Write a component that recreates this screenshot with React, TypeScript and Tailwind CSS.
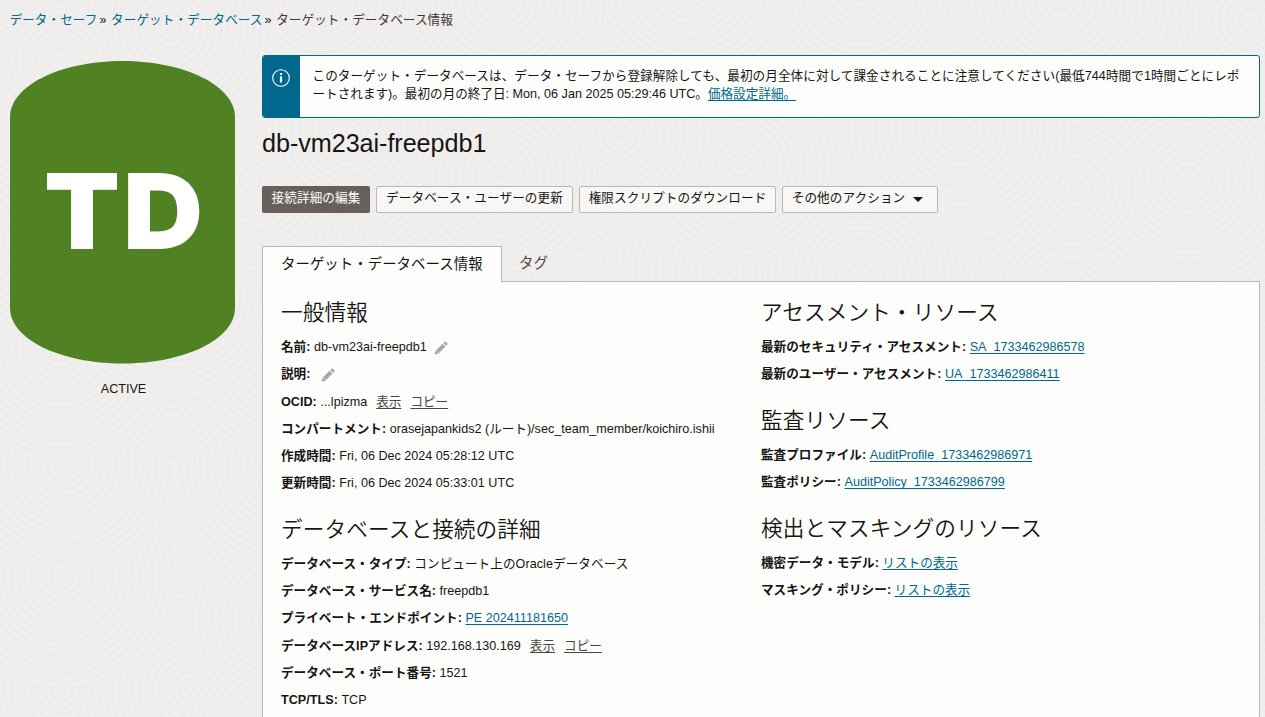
import type { ReactNode } from "react";

const RINGS = Array.from({ length: 17 }, (_, i) => 4 + i * 6.7);

/* Painted in order: each swirl covers part of the ones before it. */
const SWIRLS: [number, number, number][] = [
  [175, 745, 112], [62, 690, 108], [190, 690, 112], [290, 620, 108], [285, 740, 105],
  [62, 577, 112], [-50, 465, 108], [285, 465, 108], [65, 465, 108], [172, 400, 60], [60, 350, 110],
  [290, 350, 108], [170, 290, 112], [-40, 240, 108], [250, 180, 108],
  [420, 250, 110], [580, 260, 112], [720, 270, 108], [860, 275, 110], [1070, 300, 112],
  [1262, 640, 110], [1262, 520, 100], [1262, 400, 110], [1262, 290, 100],
  [1188, 178, 108], [1075, 190, 70], [960, 130, 112], [740, 165, 100], [620, 135, 95], [500, 175, 100], [350, 130, 90],
  [1250, 20, 100], [1060, 0, 112], [860, -10, 108], [690, -20, 100], [500, 0, 108],
  [320, -5, 100], [170, 30, 100], [20, -15, 108], [60, 60, 60],
];

function Backdrop() {
  return (
    <svg className="absolute inset-0 -z-10" width="1265" height="717" aria-hidden="true">
      <rect width="1265" height="717" fill="#f0efed" />
      {SWIRLS.map(([cx, cy, r], i) => (
        <g key={i}>
          <circle cx={cx} cy={cy} r={r} fill="#f0efed" />
          {RINGS.filter((n) => n <= r).map((n) => (
            <circle key={n} cx={cx} cy={cy} r={n} fill="none" stroke="#edecea" strokeWidth="2.6" />
          ))}
        </g>
      ))}
    </svg>
  );
}

function Pencil() {
  return (
    <svg className="ml-[7px] mt-[3px] shrink-0" width="14" height="14" viewBox="0 0 15 15" fill="#aaa5a0" aria-hidden="true">
      <path d="M.6 14.5 1.5 10.6 9.2 2.9 12.3 6 4.6 13.7Z" />
      <path d="M10 2.1 11.4.7Q12 .2 12.6.7L14.5 2.6Q15 3.2 14.5 3.8L13.1 5.2Z" />
      <path d="M2.3 10.8 4.4 12.9" stroke="#fdfdfb" strokeWidth=".7" />
    </svg>
  );
}

const UNDERLINE = "underline underline-offset-[1.5px] decoration-1 [text-decoration-skip-ink:none]";

function Link({ children }: { children: ReactNode }) {
  return (
    <a href="#" className={`text-[#00688c] ${UNDERLINE}`}>
      {children}
    </a>
  );
}

function Actions() {
  return (
    <span className="ml-[9px] flex gap-[9px] text-[#4a4643]">
      <a href="#" className={UNDERLINE}>表示</a>
      <a href="#" className={UNDERLINE}>コピー</a>
    </span>
  );
}

function Row({ label, tall, children }: { label: string; tall?: boolean; children?: ReactNode }) {
  return (
    <div className={`flex items-center whitespace-nowrap ${tall ? "h-7 pt-px" : "h-[27px]"}`}>
      <span className="mr-[3.5px] font-bold tracking-[0.03px]">{label}:</span>
      {children}
    </div>
  );
}

function Section({ title, children }: { title: string; children: ReactNode }) {
  return (
    <section>
      <h2 className="mb-[6px] text-[21.6px] leading-7 font-[350] tracking-[0.15px]">{title}</h2>
      {children}
    </section>
  );
}

const BUTTON =
  "flex h-[27px] items-center justify-center rounded-[2px] border border-[#bbb6b1] bg-[#f8f7f5] pb-[3px] tracking-[0.1px]";

export default function App() {
  return (
    <div className="relative isolate h-[717px] w-[1265px] overflow-hidden font-['Liberation_Sans','Noto_Sans_CJK_JP',sans-serif] text-[12.6px] leading-[18px] text-[#161513]">
      <Backdrop />
      <nav className="flex h-[55px] items-start pt-[11px] pl-[9.5px] tracking-[0.08px] whitespace-nowrap">
        <a href="#" className="text-[#00688c]">データ・セーフ</a>
        <span className="mr-[4.5px] ml-[2px]">»</span>
        <a href="#" className="text-[#00688c]">ターゲット・データベース</a>
        <span className="mr-[4.5px] ml-[2px]">»</span>
        <span className="text-[#3d3936]">ターゲット・データベース情報</span>
      </nav>

      <div className="flex">
        <aside className="flex w-[262px] shrink-0 flex-col pt-[6px] pl-[10px]">
          <svg width="225" height="303" viewBox="0 0 225 303">
            <path d="M0 56C0 25 50 0 112.5 0S225 25 225 56V247C225 278 175 302.500 112.5 302.500S0 278 0 247Z" fill="#508223" />
            <g fill="#fff" className="font-[Inter] text-[104.5px] font-black">
              <text x="34" y="188" textLength="76" lengthAdjust="spacingAndGlyphs">T</text>
              <text x="113" y="188" textLength="80" lengthAdjust="spacingAndGlyphs">D</text>
            </g>
          </svg>
          <div className="mt-[16px] w-[227px] text-center">ACTIVE</div>
        </aside>

        <main className="w-[998px]">
          <div className="flex h-[63px] overflow-hidden rounded-[3px] border border-[#00688c] bg-[#fdfdfb]">
            <div className="flex w-[37px] shrink-0 justify-center bg-[#00688c] pt-[13px] pr-px">
              <svg width="18" height="18" viewBox="0 0 18 18" fill="none" stroke="#fff">
                <circle cx="9" cy="9" r="8.3" strokeWidth="1.1" />
                <path d="M9 4V6M9 7.2V13.5" strokeWidth="2.2" />
              </svg>
            </div>
            <div className="pt-[11px] pl-[12.5px] whitespace-nowrap">
              <p className="tracking-[0.06px]">このターゲット・データベースは、データ・セーフから登録解除しても、最初の月全体に対して課金されることに注意してください(最低744時間で1時間ごとにレポ</p>
              <p>
                ートされます)。最初の月の終了日: Mon, 06 Jan 2025 05:29:46 UTC。<Link>価格設定詳細。</Link>
              </p>
            </div>
          </div>

          <h1 className="mt-[9px] text-[25.2px] leading-8 tracking-[-0.06px]">db-vm23ai-freepdb1</h1>

          <div className="mt-[27px] flex gap-[6px]">
            <button className="flex h-[27px] w-[108px] items-center justify-center rounded-[2px] bg-[#665f5b] pb-[3px] tracking-[0.1px] text-white">接続詳細の編集</button>
            <button className={`${BUTTON} w-[197px]`}>データベース・ユーザーの更新</button>
            <button className={`${BUTTON} w-[197px]`}>権限スクリプトのダウンロード</button>
            <button className={`${BUTTON} w-[156px] gap-[8px] pr-[5px]`}>
              その他のアクション
              <svg className="mt-[3px]" width="10" height="5" viewBox="0 0 10 5"><path d="M0 0H10L5 5Z" fill="#161513" /></svg>
            </button>
          </div>

          <div className="mt-[33px] flex h-[36px] text-[14.4px] tracking-[0.06px]">
            <div className="z-10 w-[240px] border border-b-0 border-[#bbb6b1] bg-[#fdfdfb] pt-[8px] pl-[18px]">ターゲット・データベース情報</div>
            <div className="flex-1 border-b border-[#bbb6b1] pt-[8px] pl-[17px] text-[#4a4643]">タグ</div>
          </div>

          <div className="flex h-[440px] border-x border-[#bbb6b1] bg-[#fdfdfb] pt-[17px] pl-[18px]">
            <div className="flex w-[480px] flex-col gap-5">
              <Section title="一般情報">
                <Row label="名前">db-vm23ai-freepdb1<Pencil /></Row>
                <Row label="説明"><Pencil /></Row>
                <Row label="OCID" tall>...lpizma<Actions /></Row>
                <Row label="コンパートメント">orasejapankids2 (ルート)/sec_team_member/koichiro.ishii</Row>
                <Row label="作成時間">Fri, 06 Dec 2024 05:28:12 UTC</Row>
                <Row label="更新時間">Fri, 06 Dec 2024 05:33:01 UTC</Row>
              </Section>
              <Section title="データベースと接続の詳細">
                <Row label="データベース・タイプ"><span className="tracking-[0.06px]">コンピュート上のOracleデータベース</span></Row>
                <Row label="データベース・サービス名">freepdb1</Row>
                <Row label="プライベート・エンドポイント"><Link>PE 202411181650</Link></Row>
                <Row label="データベースIPアドレス" tall>192.168.130.169<Actions /></Row>
                <Row label="データベース・ポート番号">1521</Row>
                <Row label="TCP/TLS">TCP</Row>
              </Section>
            </div>
            <div className="flex flex-col gap-5">
              <Section title="アセスメント・リソース">
                <Row label="最新のセキュリティ・アセスメント"><Link>SA_1733462986578</Link></Row>
                <Row label="最新のユーザー・アセスメント"><Link>UA_1733462986411</Link></Row>
              </Section>
              <Section title="監査リソース">
                <Row label="監査プロファイル"><Link>AuditProfile_1733462986971</Link></Row>
                <Row label="監査ポリシー"><Link>AuditPolicy_1733462986799</Link></Row>
              </Section>
              <Section title="検出とマスキングのリソース">
                <Row label="機密データ・モデル"><Link>リストの表示</Link></Row>
                <Row label="マスキング・ポリシー"><Link>リストの表示</Link></Row>
              </Section>
            </div>
          </div>
        </main>
      </div>
    </div>
  );
}
